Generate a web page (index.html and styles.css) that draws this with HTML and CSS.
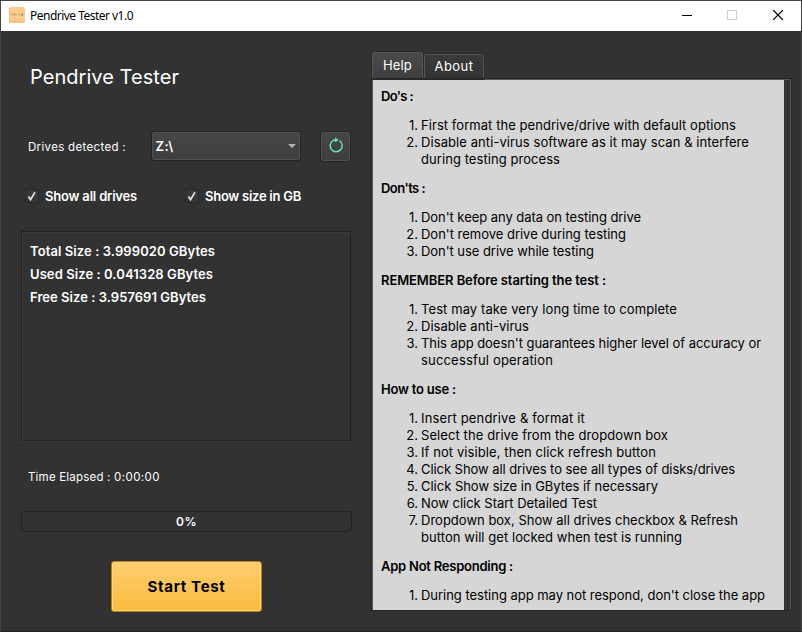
FILE: index.html
```html
<!DOCTYPE html>
<html lang="en">
<head>
<meta charset="utf-8">
<title>Pendrive Tester v1.0</title>
<link rel="stylesheet" href="styles.css">
</head>
<body>
<div class="window">
  <header class="titlebar">
    <svg class="app-icon" width="16" height="16" viewBox="0 0 16 16"><rect width="16" height="16" rx="1.5" fill="#ffcb8e"/><path d="M.5 1v14h15" fill="none" stroke="#f0bd80"/><path d="M2.5 7.5h5" stroke="#c9a67c" stroke-width="2"/><path d="M8 7.5h4" stroke="#e0b482"/><path d="M12.500 6.500h1.500v2.500h-1.500z" fill="#a08568"/></svg>
    <span class="caption"><span data-width="103">Pendrive Tester v1.0</span></span>
    <svg class="controls" width="103" height="12" viewBox="0 0 103 12" shape-rendering="crispEdges"><path d="M0 6.500h10" stroke="#000"/><rect x="45.500" y="1.500" width="9" height="9" fill="none" stroke="#ccc"/><path d="M91.500 1.500l9 9m0-9l-9 9" stroke="#000" stroke-width="1.200" shape-rendering="auto" stroke-linecap="square"/></svg>
  </header>
  <main class="content">
    <section class="left">
      <h1><span data-width="149">Pendrive Tester</span></h1>
      <div class="drive-row">
        <label class="small"><span data-width="98">Drives detected :</span></label>
        <div class="combo"><span data-width="19">Z:\</span><i class="arrow"></i></div>
        <button class="refresh" aria-label="Refresh"><svg width="16" height="17" viewBox="0 0 16 17"><path d="M11.500 3.700A6 6 0 1 1 8 2.700" fill="none" stroke="#6ce5b0" stroke-width="1.400"/><path d="M7 .4L10.800 3 7 5.300z" fill="#6ce5b0"/></svg></button>
      </div>
      <div class="checks">
        <label><i class="box"><svg width="12" height="12" viewBox="0 0 12 12"><path d="M2.500 6.500L4.500 9.700 9 2.300" fill="none" stroke="#e4e4e4" stroke-width="1.700"/></svg></i><span data-width="92">Show all drives</span></label>
        <label><i class="box"><svg width="12" height="12" viewBox="0 0 12 12"><path d="M2.500 6.500L4.500 9.700 9 2.300" fill="none" stroke="#e4e4e4" stroke-width="1.700"/></svg></i><span data-width="96">Show size in GB</span></label>
      </div>
      <div class="info">
        <div><span data-width="185">Total Size : 3.999020 GBytes</span></div>
        <div><span data-width="183">Used Size : 0.041328 GBytes</span></div>
        <div><span data-width="176">Free Size : 3.957691 GBytes</span></div>
      </div>
      <div class="elapsed small"><span data-width="86">Time Elapsed : </span><span data-width="46">0:00:00</span></div>
      <div class="progress"><span data-width="21">0%</span></div>
      <button class="start"><span data-width="78">Start Test</span></button>
    </section>
    <section class="right">
      <nav class="tabs">
        <div class="tab active"><span data-width="29">Help</span></div>
        <div class="tab"><span data-width="39">About</span></div>
      </nav>
      <div class="pane">
        <article class="help">
          <h2><span data-width="32">Do's :</span></h2>
          <ol>
            <li><span data-width="315">First format the pendrive/drive with default options</span></li>
            <li><span data-width="328">Disable anti-virus software as it may scan &amp; interfere</span><br><span data-width="139">during testing process</span></li>
          </ol>
          <h2><span data-width="44">Don'ts :</span></h2>
          <ol>
            <li><span data-width="220">Don't keep any data on testing drive</span></li>
            <li><span data-width="205">Don't remove drive during testing</span></li>
            <li><span data-width="173">Don't use drive while testing</span></li>
          </ol>
          <h2><span data-width="225">REMEMBER Before starting the test :</span></h2>
          <ol>
            <li><span data-width="256">Test may take very long time to complete</span></li>
            <li><span data-width="108">Disable anti-virus</span></li>
            <li><span data-width="340">This app doesn't guarantees higher level of accuracy or</span><br><span data-width="132">successful operation</span></li>
          </ol>
          <h2><span data-width="75">How to use :</span></h2>
          <ol>
            <li><span data-width="164">Insert pendrive &amp; format it</span></li>
            <li><span data-width="247">Select the drive from the dropdown box</span></li>
            <li><span data-width="235">If not visible, then click refresh button</span></li>
            <li><span data-width="314">Click Show all drives to see all types of disks/drives</span></li>
            <li><span data-width="237">Click Show size in GBytes if necessary</span></li>
            <li><span data-width="176">Now click Start Detailed Test</span></li>
            <li><span data-width="317">Dropdown box, Show all drives checkbox &amp; Refresh</span><br><span data-width="261">button will get locked when test is running</span></li>
          </ol>
          <h2><span data-width="132">App Not Responding :</span></h2>
          <ol>
            <li><span data-width="344">During testing app may not respond, don't close the app</span></li>
          </ol>
        </article>
      </div>
    </section>
  </main>
</div>
<script src="fit.js"></script>
</body>
</html>
```
FILE: styles.css
```css
* { box-sizing: border-box; }
body { margin: 0; background: #323232; font: 13px/17px Inter, "Open Sans", sans-serif; color: #fff; overflow: hidden; }
[data-width] { display: inline-block; white-space: pre; }
button { padding: 0; font: inherit; }
.window { width: 802px; height: 632px; border: 1px solid #444; border-bottom-color: #222; display: flex; flex-direction: column; }
.titlebar { height: 30px; flex: none; background: #fff; color: #000; display: flex; align-items: center; padding: 0 16px 0 8px; }
.app-icon { margin-bottom: 2px; }
.caption { font: 12px/16px "Noto Sans", sans-serif; margin-left: 5px; flex: 1; }
.controls { margin-bottom: 2px; }
.content { flex: 1; display: flex; gap: 21px; padding: 21px 10px 0 20px; }
.left { width: 330px; display: flex; flex-direction: column; }
h1 { font: 400 20px/26px Inter, sans-serif; margin: 12px 0 0 9px; }
.small { font-size: 11.500px; }
.drive-row { display: flex; align-items: center; height: 30px; margin-top: 41px; padding-left: 7px; }
.drive-row label { width: 123px; padding-top: 3px; }
.combo { width: 151px; height: 30px; border: 1px solid #242424; border-radius: 3px; box-shadow: inset 0 0 0 1px #515151; background: linear-gradient(#474747, #3e3e3e); display: flex; align-items: center; justify-content: space-between; padding: 0 4px; font-weight: 600; }
.arrow { border: 4px solid transparent; border-top-color: #b4b4b4; border-bottom: 0; }
.refresh { flex: none; width: 31px; height: 31px; margin-left: 19px; border: 1px solid #242424; border-radius: 3px; box-shadow: inset 0 0 0 1px #515151; background: linear-gradient(#474747, #3e3e3e); display: flex; align-items: center; justify-content: center; }
.refresh svg { margin-bottom: 2px; }
.checks { display: flex; margin-top: 26px; padding-left: 4px; height: 18px; font-weight: 600; }
.checks label { width: 160px; display: flex; align-items: center; gap: 6px; }
.box { width: 14px; height: 14px; border: 1px solid #282828; background: #373737; display: flex; }
.info { height: 210px; margin-top: 26px; border: 1px solid #222; box-shadow: inset 1px 1px #393939, 0 1px #3b3b3b; padding: 8px; font-weight: 600; line-height: 23px; }
.elapsed { margin: 28px 0 0 7px; }
.progress { width: 331px; height: 21px; margin-top: 25px; border: 1px solid #242424; border-radius: 3px; text-align: center; line-height: 20px; font-size: 12px; font-weight: 600; }
.start { width: 151px; height: 51px; margin: 29px 0 0 90px; border: 1px solid #b97d12; border-radius: 3px; box-shadow: inset 0 0 0 1px #ffd681; background: linear-gradient(#ffce70, #fabb3e); color: #000; font-size: 15px; font-weight: 700; }
.right { width: 419px; }
.tabs { display: flex; align-items: flex-end; height: 27px; }
.tab { height: 25px; width: 60px; display: flex; align-items: center; justify-content: center; padding-bottom: 2px; border: 1px solid #565656; border-bottom: 0; border-radius: 2px 2px 0 0; background: linear-gradient(#3a3a3a, #323232); outline: 1px solid #292929; }
.tab.active { width: 51px; height: 27px; margin-right: 1px; background: linear-gradient(#4a4a4a, #3f3f3f); }
.pane { height: 531px; border: solid #595959; border-width: 1px 1px 0; outline: 1px solid #262626; padding-right: 6px; }
.help { height: 530px; background: #d6d6d6; color: #000; padding: 8px 8px 0; overflow: hidden; }
.help h2 { font-size: 13px; font-weight: 600; line-height: 17px; margin: 0 0 12px; }
.help ol { margin: 0 0 12px; padding-left: 40px; list-style: none; counter-reset: step; }
.help li { position: relative; counter-increment: step; }
.help li::before { content: counter(step) "."; position: absolute; right: 100%; margin-right: 3px; }
```
FILE: fit.js
```js
document.querySelectorAll('[data-width]').forEach(function (label) {
  var gap = (Number(label.dataset.width) - label.getBoundingClientRect().width) / label.textContent.length;
  label.style.letterSpacing = gap + 'px';
});
```
